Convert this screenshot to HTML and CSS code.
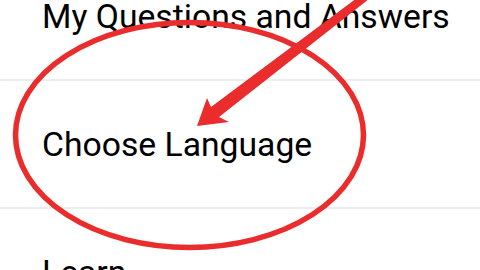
FILE: index.html
```html
<!DOCTYPE html>
<html>
  <head>
    <title>Settings</title>
    <link rel="stylesheet" href="styles.css">
  </head>
  <body>
    <div class="screen">
      <ul class="menu">
        <li class="menu-item">My Questions and Answers</li>
        <li class="menu-item">Choose Language</li>
        <li class="menu-item">Learn</li>
      </ul>

      <svg class="markup" width="480" height="270" viewBox="0 0 480 270">
        <ellipse cx="189.5" cy="135" rx="174" ry="112.5" fill="none" stroke="#ea2c2c" stroke-width="5.5" />
        <polygon fill="#ea2c2c"
          points="197,126 207,98 211,107 369,-11 374,-5 219,117 229,122" />
      </svg>
    </div>
  </body>
</html>
```

FILE: styles.css
```css
html,
body {
  margin: 0;
  padding: 0;
  background-color: #ffffff;
}
body {
  font-family: Roboto, "Noto Sans", "Liberation Sans", sans-serif;
}
.screen {
  position: relative;
  width: 480px;
  height: 270px;
  overflow: hidden;
}
.menu {
  list-style: none;
  margin: -47px 0 0 0;
  padding: 0;
}
.menu-item {
  height: 126px;
  display: flex;
  align-items: center;
  padding-left: 42px;
  border-bottom: 2px solid #ededed;
  font-size: 33.7px;
  color: #000000;
}
.markup {
  position: absolute;
  top: 0;
  left: 0;
}
```
